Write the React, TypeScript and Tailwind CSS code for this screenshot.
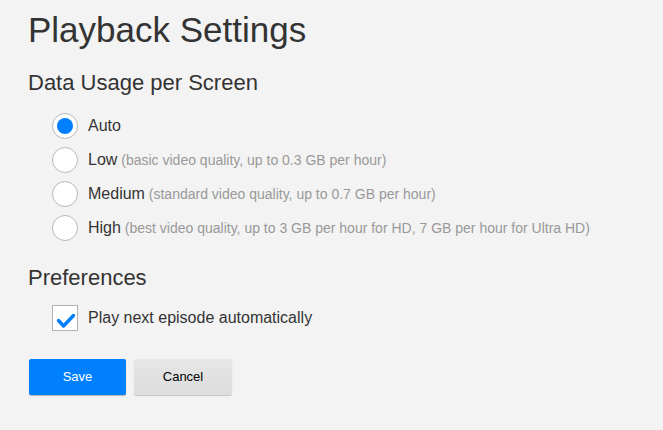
import React, { useState } from "react";

const options = [
  { id: "auto", label: "Auto", note: "" },
  { id: "low", label: "Low", note: "(basic video quality, up to 0.3 GB per hour)" },
  { id: "medium", label: "Medium", note: "(standard video quality, up to 0.7 GB per hour)" },
  {
    id: "high",
    label: "High",
    note: "(best video quality, up to 3 GB per hour for HD, 7 GB per hour for Ultra HD)",
  },
];

export default function App() {
  const [usage, setUsage] = useState("auto");
  const [autoplay, setAutoplay] = useState(true);

  return (
    <div
      className="w-screen min-h-screen bg-[#f3f3f3] text-[#333] pl-[28px] pt-[10px] flex flex-col"
      style={{ fontFamily: '"Liberation Sans", Arial, sans-serif' }}
    >
      <h1 className="text-[35px] leading-[40px] font-normal">Playback Settings</h1>

      <h2 className="mt-[20px] text-[22px] leading-[26px] font-normal">Data Usage per Screen</h2>

      <div className="mt-[17px] ml-[24px] flex flex-col gap-[8px]">
        {options.map((o) => (
          <label key={o.id} className="flex items-center gap-[10px] cursor-pointer">
            <span
              onClick={() => setUsage(o.id)}
              className="w-[26px] h-[26px] rounded-full bg-white border border-[#b8b8b8] flex items-center justify-center shrink-0"
            >
              {usage === o.id && <span className="w-[16px] h-[16px] rounded-full bg-[#0080ff]" />}
            </span>
            <span className="text-[16px] leading-[20px] whitespace-nowrap">
              {o.label}
              {o.note && <span className="text-[14px] text-[#999]"> {o.note}</span>}
            </span>
          </label>
        ))}
      </div>

      <h2 className="mt-[24px] text-[22px] leading-[26px] font-normal">Preferences</h2>

      <label className="mt-[14px] ml-[24px] flex items-center gap-[10px] cursor-pointer">
        <span
          onClick={() => setAutoplay(!autoplay)}
          className="w-[26px] h-[26px] bg-white border border-[#b3b3b3] shrink-0 relative"
        >
          {autoplay && (
            <svg viewBox="0 0 26 26" className="absolute -left-px -top-px w-[26px] h-[26px]">
              <polyline
                points="6.5,15.5 11.5,21 21.5,10.5"
                fill="none"
                stroke="#0080ff"
                strokeWidth="3.4"
                strokeLinecap="round"
                strokeLinejoin="round"
              />
            </svg>
          )}
        </span>
        <span className="text-[16px] leading-[20px]">Play next episode automatically</span>
      </label>

      <div className="mt-[28px] ml-px flex gap-[8px]">
        <button className="w-[97px] h-[36px] rounded-[2px] bg-[#0080ff] text-white text-[13px] shadow-[0_1px_1px_rgba(0,0,0,0.25)]">
          Save
        </button>
        <button className="w-[98px] h-[36px] rounded-[2px] bg-gradient-to-b from-[#e6e6e6] to-[#dddddd] text-black text-[13px] shadow-[0_1px_1px_rgba(0,0,0,0.2)]">
          Cancel
        </button>
      </div>
    </div>
  );
}
